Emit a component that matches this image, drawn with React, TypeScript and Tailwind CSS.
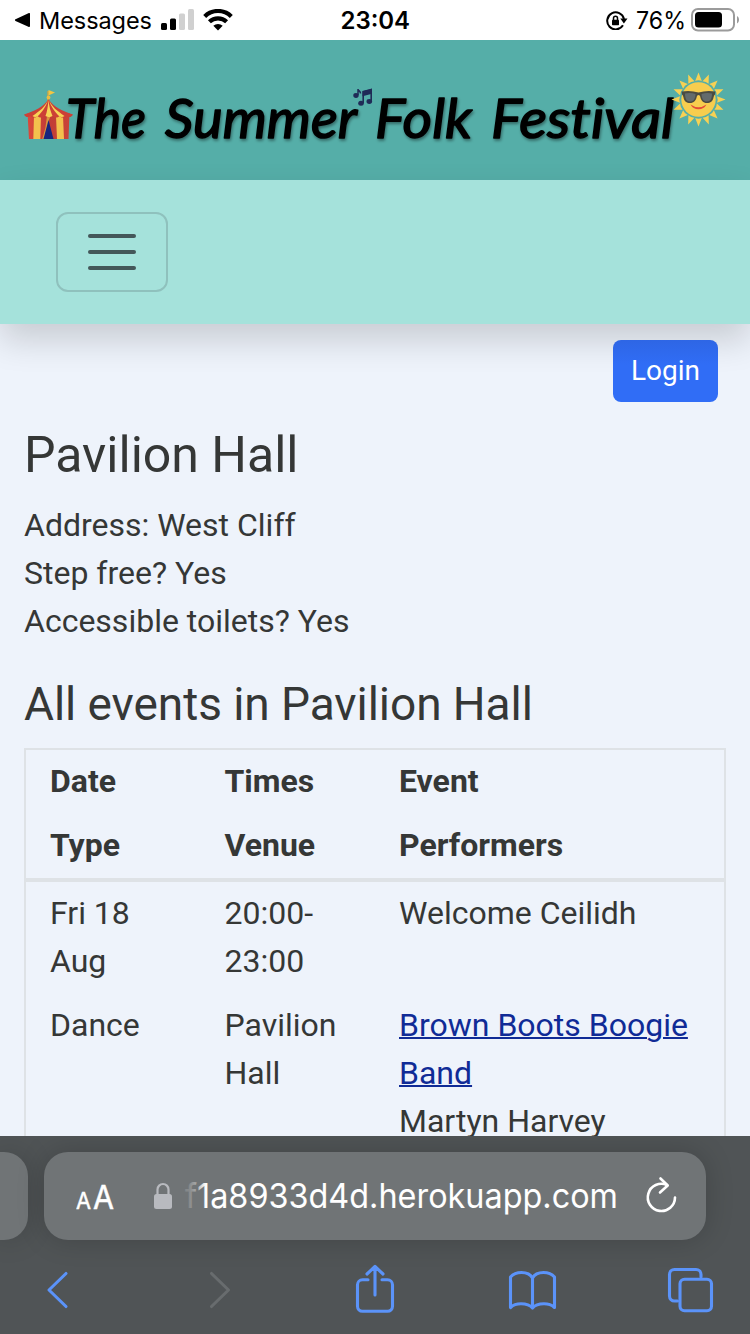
import React from "react";

function StatusBar() {
  return (
    <div className="flex h-10 shrink-0 items-center bg-white text-black font-[Inter,sans-serif]">
      <div className="flex w-[320px] items-center pl-[14px]">
        <svg width="17" height="16" viewBox="0 0 17 16"><path d="M16 2v12a1 1 0 0 1-1.6.8L1.5 9a1 1 0 0 1 0-1.800L14.400 1.200A1 1 0 0 1 16 2z" /></svg>
        <svg width="114" height="34" className="ml-[8px] shrink-0 overflow-visible"><text x="0" y="26" fontSize="23.500" textLength="113" lengthAdjust="spacing">Messages</text></svg>
        <svg className="ml-[8px]" width="33" height="22" viewBox="0 0 33 22">
          <rect x="0" y="14" width="6" height="7" rx="1.500" />
          <rect x="9" y="9.500" width="6" height="11.500" rx="1.500" />
          <rect x="18" y="4.500" width="6" height="16.500" rx="1.500" fill="#d0d0d0" />
          <rect x="27" y="0" width="6" height="21" rx="1.500" fill="#d0d0d0" />
        </svg>
        <svg className="ml-[9px]" width="30" height="22" viewBox="0 0 30 22" fill="none" stroke="#000" strokeWidth="4.200">
          <path d="M1.700 7.400a19 19 0 0 1 26.600 0" />
          <path d="M6.400 12.800a12.500 12.500 0 0 1 17.200 0" />
          <path d="M15 21.500l-4.700-4.800a7 7 0 0 1 9.400 0z" fill="#000" stroke="none" />
        </svg>
      </div>
      <svg width="110" height="40"><text x="20.500" y="29" fontSize="24" fontWeight="600" textLength="69.500" lengthAdjust="spacing">23:04</text></svg>
      <div className="flex flex-1 items-center justify-end pr-[10px]">
        <svg width="22" height="20" viewBox="0 0 22 20" fill="none" stroke="#000" strokeWidth="2">
          <path d="M17 15.300A8.500 8.500 0 1 1 18 9" />
          <path d="M14.300 8.600h7.200l-3.600 5z" fill="#000" stroke="none" />
          <rect x="6" y="9.700" width="7" height="5.500" rx=".7" fill="#000" stroke="none" />
          <path d="M7.500 10V8.200a2 2 0 0 1 4 0V10" strokeWidth="1.500" />
        </svg>
        <svg className="ml-[7px] overflow-visible" width="52" height="40"><text x="1" y="29" fontSize="24" textLength="50" lengthAdjust="spacingAndGlyphs">76%</text></svg>
        <svg className="ml-[4px]" width="49" height="24" viewBox="0 0 49 24">
          <rect x="1" y="1" width="42" height="21.500" rx="6" fill="none" stroke="#9b9b9b" strokeWidth="2" />
          <rect x="4" y="4" width="27" height="15.500" rx="3.500" />
          <path d="M46 8c2.700 1.500 2.700 6 0 7.500z" fill="#9b9b9b" />
        </svg>
      </div>
    </div>
  );
}

const rays = Array.from({ length: 16 }, (_, i) => i * 22.5);

function Banner() {
  return (
    <header className="h-[140px] shrink-0 bg-[#55aea8]">
      <svg width="750" height="140" viewBox="0 40 750 140">
        <defs>
          <filter id="soft" x="-5%" y="-20%" width="110%" height="150%">
            <feDropShadow dx="1" dy="2" stdDeviation="1.500" floodColor="#000" floodOpacity=".4" />
          </filter>
          <linearGradient id="red" x2="1"><stop stopColor="#db493b" /><stop offset=".5" stopColor="#c13c36" /><stop offset="1" stopColor="#c94438" /></linearGradient>
        </defs>
        <g filter="url(#soft)" fontFamily="Lato, sans-serif" fontWeight="400" fontStyle="italic" fontSize="55" fill="#000" stroke="#000" strokeWidth="1.500" strokeLinejoin="round" className="[font-variant-ligatures:none]">
          <text x="66" y="138" textLength="80" lengthAdjust="spacingAndGlyphs">The</text>
          <text x="165" y="138" textLength="192" lengthAdjust="spacingAndGlyphs">Summer</text>
          <text x="375" y="138" textLength="97" lengthAdjust="spacingAndGlyphs">Folk</text>
          <text x="491" y="138" textLength="183" lengthAdjust="spacingAndGlyphs">Festival</text>
        </g>
        <g>
          <path d="M48 91v12" stroke="#d6a13a" strokeWidth="1.300" />
          <path d="M48.500 90l6.500 2.500-6.500 3z" fill="#f3c642" />
          <path d="M27.500 113h42l-1 26H29z" fill="url(#red)" />
          <path d="M34 116h7l-.7 23h-7zM56 116h7l1 23h-7z" fill="#f3c04d" />
          <path d="M47 116h3.500l-1.500 4-4.500 19h-2.300q4-11 4.800-23z" fill="#d9963f" />
          <path d="M48.500 120l5 19h-10z" fill="#17257e" />
          <path d="M48.500 99C44 107 34 111 24 114.500c1 2.500 4 3.500 6.500 1.500 2 2 5 2 7 0 2 2 5 2 7 0 2 1.500 6 1.500 8 0 2 2 5 2 7 0 2 2 5 2 7 0 2.500 2 5.500 1 6.500-1.500C63 111 53 107 48.500 99z" fill="#cc4036" />
          <path d="M48.500 99c-3 8-9 12-16 17 2 1.500 4 1 5.500 0 4-4 8-9 10.500-17zM48.500 99c3 8 9 12 16 17-2 1.500-4 1-5.500 0-4-4-8-9-10.500-17zM48.500 100c-.5 6-1.500 12-3 16 2 1.500 5 1.500 7 0-2-5-3.500-10-4-16z" fill="#f8d355" />
          <circle cx="48.500" cy="97.500" r="1.900" fill="#e9bd42" />
        </g>
        <g fill="#1f2b57" stroke="#1f2b57">
          <ellipse cx="356" cy="95.500" rx="2.700" ry="2.400" stroke="none" />
          <path d="M358 95v-6c.3 2 2.500 2 2.500 4.500" fill="none" strokeWidth="1.500" />
          <ellipse cx="361" cy="103.200" rx="2.800" ry="2.500" stroke="none" />
          <ellipse cx="369.300" cy="101.500" rx="2.800" ry="2.400" stroke="none" />
          <path d="M363.200 103V91.500l8-2V101" fill="none" strokeWidth="1.600" />
          <path d="M362.500 91.200l9.500-2.500v5l-9.500 2.500z" stroke="none" />
        </g>
        <g>
          {rays.map((a) => (
            <path key={a} d="M695.200 81l3.300-8.500 3.300 8.500q-3.300-1.300-6.600 0z" fill="#f7d154" transform={`rotate(${a} 698.500 99.500)`} />
          ))}
          <circle cx="698.500" cy="99.500" r="17.200" fill="#f7cd4e" />
          <path d="M681.500 91.500q9-1.500 17 1 8-2.500 17-1l-.5 3q-1 .5-1.500 3c-.8 4-3 5.500-6.500 5.500-4 0-6-2.500-6.800-6.500q-.2-1.500-1.700-1.500t-1.700 1.500c-.8 4-2.800 6.500-6.800 6.500-3.500 0-5.700-1.500-6.500-5.500q-.5-2.500-1.500-3z" fill="#4b4c42" />
          <path d="M685 93.500q6-1 10.500.5c-.2 5-2 7.500-5.500 7.500s-5-3-5-8zM712 93.500q-6-1-10.500.5c.2 5 2 7.500 5.500 7.500s5-3 5-8z" fill="#636b6c" />
          <path d="M690.500 104.500q8 5.500 16 0-2.500 4.700-8 4.700t-8-4.700z" fill="#e34c38" />
        </g>
      </svg>
    </header>
  );
}

function Browser() {
  return (
    <footer className="h-[198px] shrink-0 overflow-hidden bg-[#505456] pt-4">
      <div className="flex h-[88px] gap-4">
        <div className="w-7 shrink-0 rounded-r-[24px] bg-[#707476] shadow-[0_0_28px_rgba(0,0,0,0.18)]" />
        <div className="flex w-[662px] shrink-0 items-center rounded-[24px] bg-[#707476] pl-[32px] shadow-[0_0_28px_rgba(0,0,0,0.18)]">
          <svg width="40" height="40" className="shrink-0 font-[Inter,sans-serif]" fill="#fff" stroke="#fff" strokeWidth=".5">
            <text x="0" y="32.500" fontSize="23.500" textLength="15" lengthAdjust="spacingAndGlyphs">A</text>
            <text x="17" y="32.500" fontSize="33" textLength="21" lengthAdjust="spacingAndGlyphs">A</text>
          </svg>
          <svg className="ml-[37px] shrink-0" width="20" height="28" viewBox="0 0 20 28">
            <rect x="1" y="12" width="18" height="15" rx="2.500" fill="#b8babf" />
            <path d="M4.500 13V7.500a5.500 5.500 0 0 1 11 0V13" fill="none" stroke="#b8babf" strokeWidth="2.200" />
          </svg>
          <svg className="ml-[12px] shrink-0 overflow-visible font-[Inter,sans-serif]" width="434" height="60">
            <defs><linearGradient id="fade" gradientUnits="userSpaceOnUse" x1="0" x2="26" y1="0" y2="0"><stop offset=".15" stopColor="#fff" stopOpacity=".15" /><stop offset=".4" stopColor="#fff" stopOpacity=".35" /><stop offset=".8" stopColor="#fff" /></linearGradient></defs>
            <text x="0" y="42" fontSize="33.500" fill="url(#fade)" textLength="433" lengthAdjust="spacingAndGlyphs">f1a8933d4d.herokuapp.com</text>
          </svg>
          <svg className="ml-[25px] shrink-0" width="36" height="40" viewBox="0 0 36 40" fill="none" stroke="#fff" strokeWidth="2.600" strokeLinecap="round" strokeLinejoin="round">
            <path d="M31 21.500a13.600 13.600 0 1 1-8-12.500" />
            <path d="M16.500 2.500l7.200 7-7.700 7" />
          </svg>
        </div>
      </div>
      <svg width="750" height="94" viewBox="0 1240 750 94" fill="none" stroke="#5b93f9" strokeWidth="3.100" strokeLinecap="round" strokeLinejoin="round">
        <path d="M66 1273.500L49 1290l17 16.500" />
        <path d="M211.500 1273.500l17 16.500-17 16.500" stroke="#686c6e" />
        <path d="M368 1279.800h-5.500a5 5 0 0 0-5 5v21.500a5 5 0 0 0 5 5h25a5 5 0 0 0 5-5v-21.500a5 5 0 0 0-5-5H382M375 1295v-28M367 1274l8-7.500 8 7.500" />
        <path d="M510.500 1307.500V1277q4-4.500 11-4.500 8 0 11 5.500 3-5.500 11-5.500 7 0 11 4.500v30.500q-4-3.700-10.500-3.700-8 0-11.500 4.200-3.500-4.200-11.500-4.200-6.500 0-10.500 3.700zM532.500 1278v30" />
        <rect x="680" y="1279.300" width="31.500" height="31.500" rx="4.500" />
        <path d="M701 1277v-2.500a5 5 0 0 0-5-5h-21.500a5 5 0 0 0-5 5V1296a5 5 0 0 0 5 5h3" />
      </svg>
    </footer>
  );
}

export default function App() {
  return (
    <div className="flex h-[1334px] w-[750px] flex-col overflow-hidden bg-[#eef3fb] text-[32px] leading-[48px] text-[#353736] font-[Roboto,sans-serif]">
      <StatusBar />
      <Banner />
      <nav className="h-36 shrink-0 bg-[#a5e2db] pl-14 pt-8 shadow-[0_16px_32px_rgba(0,0,0,0.16)]">
        <button className="flex h-20 w-28 flex-col items-center justify-center gap-3 rounded-xl border-2 border-[#8fc1bd]">
          <span className="h-1 w-12 rounded-full bg-[#445759]" />
          <span className="h-1 w-12 rounded-full bg-[#445759]" />
          <span className="h-1 w-12 rounded-full bg-[#445759]" />
        </button>
      </nav>
      <main className="min-h-0 flex-1 overflow-hidden px-6 pt-4">
        <div className="flex justify-end pr-2">
          <button className="h-[62px] w-[105px] rounded-[8px] bg-linear-to-b from-[#2e66e5] to-[#306df6] to-40% text-[28px] text-white">Login</button>
        </div>
        <h1 className="mt-[23px] h-[76px] text-[50px] leading-[60px]">Pavilion Hall</h1>
        <p>Address: West Cliff</p>
        <p>Step free? Yes</p>
        <p>Accessible toilets? Yes</p>
        <h2 className="mt-8 h-[71px] text-[46px] leading-[55px] tracking-[-0.06px]">All events in Pavilion Hall</h2>
        <section className="h-[500px] border-2 border-[#dee2e6]">
          <div className="grid grid-cols-[174.5px_174.500px_1fr] border-b-4 border-[#dee2e6] font-bold *:pb-[9px] *:pl-6 *:pt-[7px]">
            <div>Date</div><div>Times</div><div>Event</div>
            <div>Type</div><div>Venue</div><div>Performers</div>
          </div>
          <div className="grid grid-cols-[174.5px_174.500px_1fr] *:pb-[9px] *:pl-6 *:pt-[7px]">
            <div>Fri 18<br />Aug</div><div>20:00-<br />23:00</div><div>Welcome Ceilidh</div>
            <div>Dance</div><div>Pavilion<br />Hall</div>
            <div><a className="text-[#102b96] underline decoration-2">Brown Boots Boogie<br />Band</a><br />Martyn Harvey</div>
          </div>
        </section>
      </main>
      <Browser />
    </div>
  );
}
